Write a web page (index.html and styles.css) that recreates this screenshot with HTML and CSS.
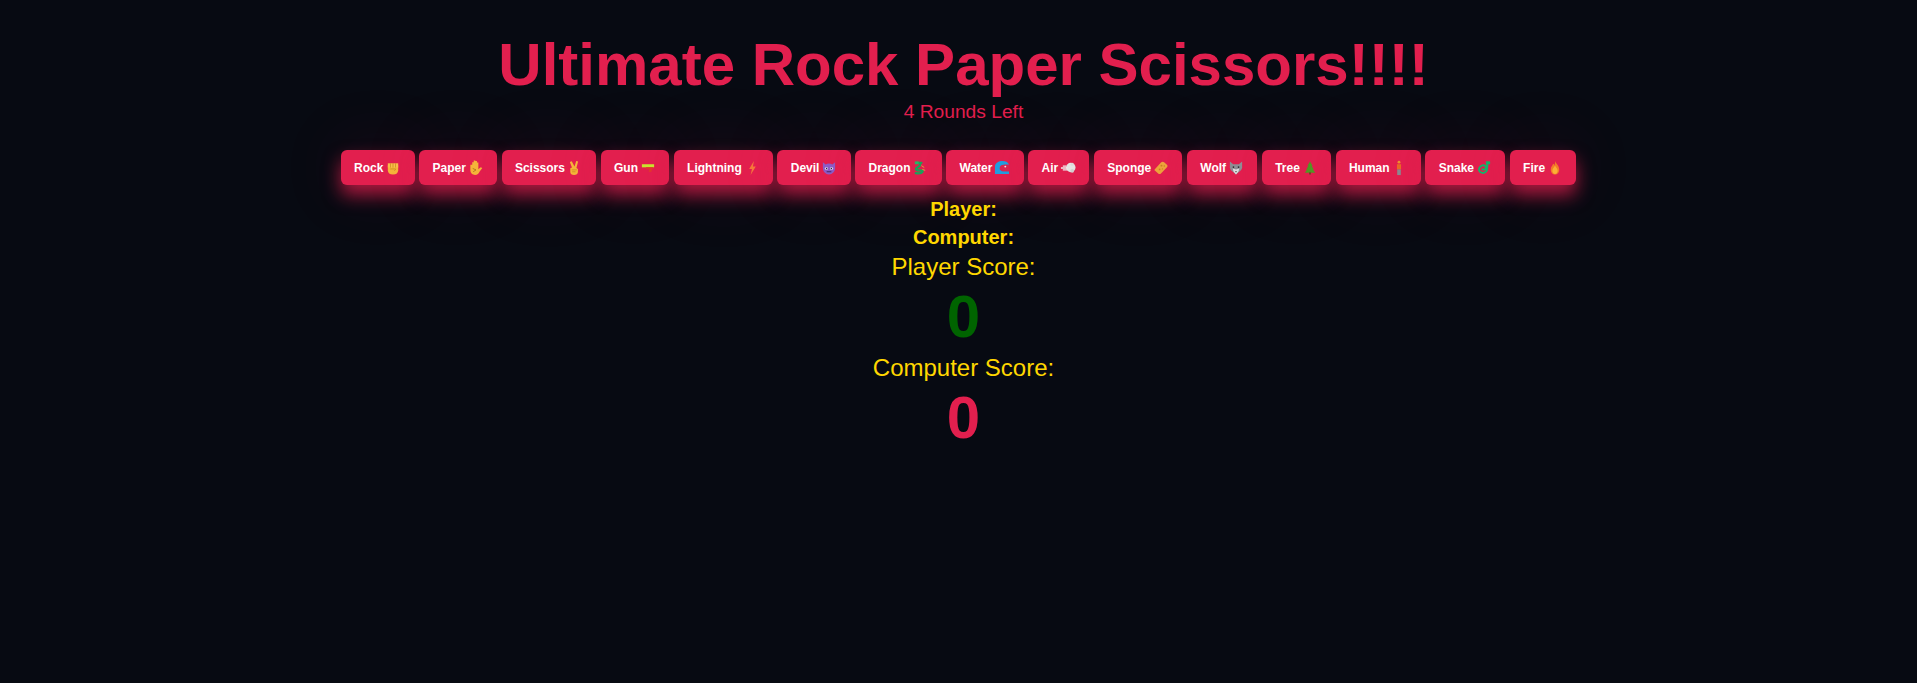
FILE: index.html
```html
<!DOCTYPE html>
<html lang="en">
<head>
<meta charset="utf-8">
<title>Ultimate Rock Paper Scissors</title>
<link rel="stylesheet" href="styles.css">
</head>
<body>
<main class="game">
<header class="block">
<h1 class="title">Ultimate Rock Paper Scissors!!!!</h1>
<p class="rounds">4 Rounds Left</p>
</header>
<div class="choices">
<button class="choice">Rock <svg class="emoji" viewBox="0 0 17 17"><path d="M3 5.500h11v5.500c0 3-2 4.500-5.500 4.500s-5.500-1.500-5.500-4.500z" fill="#f5b63a"/><path d="M3 3.500h11v4.500h-11z" fill="#f8c04a"/><path d="M5.800 3.500v4.500M8.500 3.500v4.500M11.200 3.500v4.500" stroke="#c98a1d" stroke-width=".8"/><path d="M5.500 9.500h6l-1.500 2" fill="none" stroke="#c98a1d" stroke-width=".8"/></svg></button>
<button class="choice">Paper <svg class="emoji" viewBox="0 0 17 17"><path d="M2.500 5v6c0 3 2.500 5 5 5s4-1.500 4.700-3.500l3-4-1.700-.8-2.500 2v-7h-1.500v-1.700h-1.700v-.5h-1.700v2h-1.600v2.500z" fill="#f5b63a"/><path d="M5 9l3.500 1.500-3 2" fill="none" stroke="#a8741a" stroke-width=".9"/></svg></button>
<button class="choice">Scissors <svg class="emoji" viewBox="0 0 17 17"><path d="M3 2l2-.7 3 5.700 1.800-6 2 .6-1.800 7 1.600 1v3.200c0 2-1.700 3.200-4.100 3.200s-4-1.200-4-3.200v-4l1.800-.7z" fill="#f5b63a"/><path d="M5 10.500h5.500M5.500 12.500h3.500" stroke="#c98a1d" stroke-width=".8"/></svg></button>
<button class="choice">Gun <svg class="emoji" viewBox="0 0 17 17"><path d="M2 4.500h13v3.300h-13z" fill="#c9e52e"/><path d="M6.500 7.800h7.500v1.700l-1.200.3-.8 3h-2.800l.5-3h-3.700z" fill="#e2352f"/></svg></button>
<button class="choice">Lightning <svg class="emoji" viewBox="0 0 17 17"><path d="M10.500 1l-5 8.500h3l-1.500 6.500 5.500-9h-3z" fill="#f6793b"/></svg></button>
<button class="choice">Devil <svg class="emoji" viewBox="0 0 17 17"><path d="M2 2.500l3 2.200c2-1.200 5-1.200 7 0l3-2.200v6c0 4-3 6.800-6.500 6.800s-6.500-2.800-6.500-6.800z" fill="#8b5cc8"/><ellipse cx="5.800" cy="9" rx="1.700" ry="1.400" fill="#e6e0ee"/><ellipse cx="11.200" cy="9" rx="1.700" ry="1.400" fill="#e6e0ee"/><circle cx="6" cy="9" r=".8" fill="#2c1f44"/><circle cx="11" cy="9" r=".8" fill="#2c1f44"/><path d="M6 12.500h5" stroke="#3c2560" stroke-width="1"/></svg></button>
<button class="choice">Dragon <svg class="emoji" viewBox="0 0 17 17"><path d="M5 3h5M7 3c4 2 0 4-2 5.500s0 2.500 3 2.500 4 .5 3 2-4 1.500-7 1" fill="none" stroke="#19a45a" stroke-width="2.400" stroke-linecap="round"/><path d="M3 1.500h4v3h-4z" fill="#28b866"/><path d="M10 6l3 2M11 10l3 1" stroke="#e8a23a" stroke-width="1"/></svg></button>
<button class="choice">Water <svg class="emoji" viewBox="0 0 17 17"><path d="M1 15v-8c0-4 4-6 8-6 3 0 6 1 7 4l-5 0c-3 0-5 1-5 4 0 2 2 3 4 3h6v3z" fill="#1f9fe0"/><path d="M7 8c0-2 2-3 4-3h5v7h-6c-2 0-3-2-3-4z" fill="#d92650"/><circle cx="12" cy="7" r="1" fill="#f5dfe5"/></svg></button>
<button class="choice">Air <svg class="emoji" viewBox="0 0 17 17"><circle cx="11.500" cy="8" r="5" fill="#e6e6e6"/><circle cx="13" cy="4.500" r="1.700" fill="#dcdcdc"/><circle cx="13" cy="11.500" r="2" fill="#d2d2d2"/><path d="M1 8.500h7M3 6.500h4M3 10.500h5" stroke="#f0f0f0" stroke-width="1.400"/></svg></button>
<button class="choice">Sponge <svg class="emoji" viewBox="0 0 17 17"><path d="M2.200 9.500l6.500-7c1-.9 2.300-.9 3.100 0l3 2.500c.8.800.8 2 0 2.800l-6.300 6.500c-.9.900-2.100.9-3 0l-3.300-2.800c-.8-.7-.8-1.500 0-2z" fill="#eda43c"/><circle cx="9" cy="6" r="1" fill="#c97f22"/><circle cx="12" cy="6.500" r=".8" fill="#c97f22"/><circle cx="7" cy="10" r=".9" fill="#c97f22"/><circle cx="10" cy="9.500" r=".7" fill="#c97f22"/></svg></button>
<button class="choice">Wolf <svg class="emoji" viewBox="0 0 17 17"><path d="M2 1.500l3.500 3h6l3.500-3v7l-1 2-5.500 5-5.500-5-1-2z" fill="#8d9096"/><path d="M5 9l3.500 1 3.500-1-1 3.500-2.500 3-2.500-3z" fill="#dfe0e2"/><circle cx="5.800" cy="7.500" r=".9" fill="#2a2a2e"/><circle cx="11.200" cy="7.500" r=".9" fill="#2a2a2e"/><path d="M7.500 12h2l-1 1.300z" fill="#2a2a2e"/></svg></button>
<button class="choice">Tree <svg class="emoji" viewBox="0 0 17 17"><path d="M8.500 1.500l2.700 4.500h-1l2.300 4h-.8l2.300 3.500h-11l2.300-3.500h-.8l2.300-4h-1z" fill="#4f9a24"/><path d="M7.500 13h2v2.500h-2z" fill="#6b4a22"/></svg></button>
<button class="choice">Human <svg class="emoji" viewBox="0 0 17 17"><circle cx="8.500" cy="2.300" r="1.500" fill="#f0902f"/><path d="M6.300 4.500h4.400v5.500h-4.400z" fill="#ea6a25"/><path d="M6.600 10h3.800v6h-3.800z" fill="#8a8a92"/></svg></button>
<button class="choice">Snake <svg class="emoji" viewBox="0 0 17 17"><path d="M12 1.500v7c0 4-3 6-6 5s-4-4-1.500-6.500 6-1.500 6 1-3.500 3-4 1" fill="none" stroke="#12b76a" stroke-width="2"/><path d="M10.500 1.500h4.500v3h-4.500z" fill="#12b76a"/></svg></button>
<button class="choice">Fire <svg class="emoji" viewBox="0 0 17 17"><path d="M8.500 1c.5 2.500 4.500 4.500 4.500 9 0 3-2 5.500-4.500 5.500s-4.500-2.500-4.500-5.500c0-3 2-4 2.500-6 1 .5 1.500 1 1.500 2 .5-1.500.5-3.500.5-5z" fill="#f37a2a"/><path d="M8.500 6c.8 1.500 2.800 3 2.800 5.500 0 2-1.200 3.500-2.800 3.500s-2.800-1.500-2.800-3.500c0-2.500 2-4 2.800-5.500z" fill="#fbb034"/></svg></button>
</div>
<section class="block">
<p class="pick">Player:</p>
<p class="pick">Computer:</p>
<p class="score-label">Player Score:</p>
<p class="score score-player">0</p>
<p class="score-label">Computer Score:</p>
<p class="score score-computer">0</p>
</section>
</main>
</body>
</html>
```
FILE: styles.css
```css
* { box-sizing: border-box; }
html, body { margin: 0; height: 100%; }
body {
  background-color: #070a12;
  font-family: "Liberation Sans", Arial, sans-serif;
  color: #ffd700;
  overflow: hidden;
}
.game { display: flex; flex-direction: column; align-items: center; padding-top: 30px; }
.block { padding-left: 10px; text-align: center; }
.title { margin: 0 0 2px; font-size: 60px; line-height: 69px; font-weight: 700; color: #e21f4e; }
.rounds { margin: 0; font-size: 19.2px; line-height: 22px; color: #e21f4e; }
.choices { display: flex; justify-content: center; gap: 4.45px; margin: 27px 0 10px; }
.choice {
  display: block; height: 35px; padding: 0 10.9px 0 13.4px; border: 0; border-radius: 6px;
  background: #e21f4e; color: #fff; font: 700 12px "Liberation Sans", Arial, sans-serif;
  white-space: nowrap;
  box-shadow: 0 10px 18px rgba(226, 31, 78, .75), 0 0 70px rgba(226, 31, 78, .14);
}
.emoji { display: inline-block; width: 16px; height: 16px; margin: 0 2.5px 0 -1.5px; vertical-align: -4px; }
.pick { margin: 0; font-size: 20px; line-height: 28px; font-weight: 700; }
.score-label { margin: 0; font-size: 24px; line-height: 31px; }
.score { margin: 0; font-size: 60px; line-height: 70px; font-weight: 700; }
.score-player { color: #006400; }
.score-computer { color: #e21f4e; }
```
